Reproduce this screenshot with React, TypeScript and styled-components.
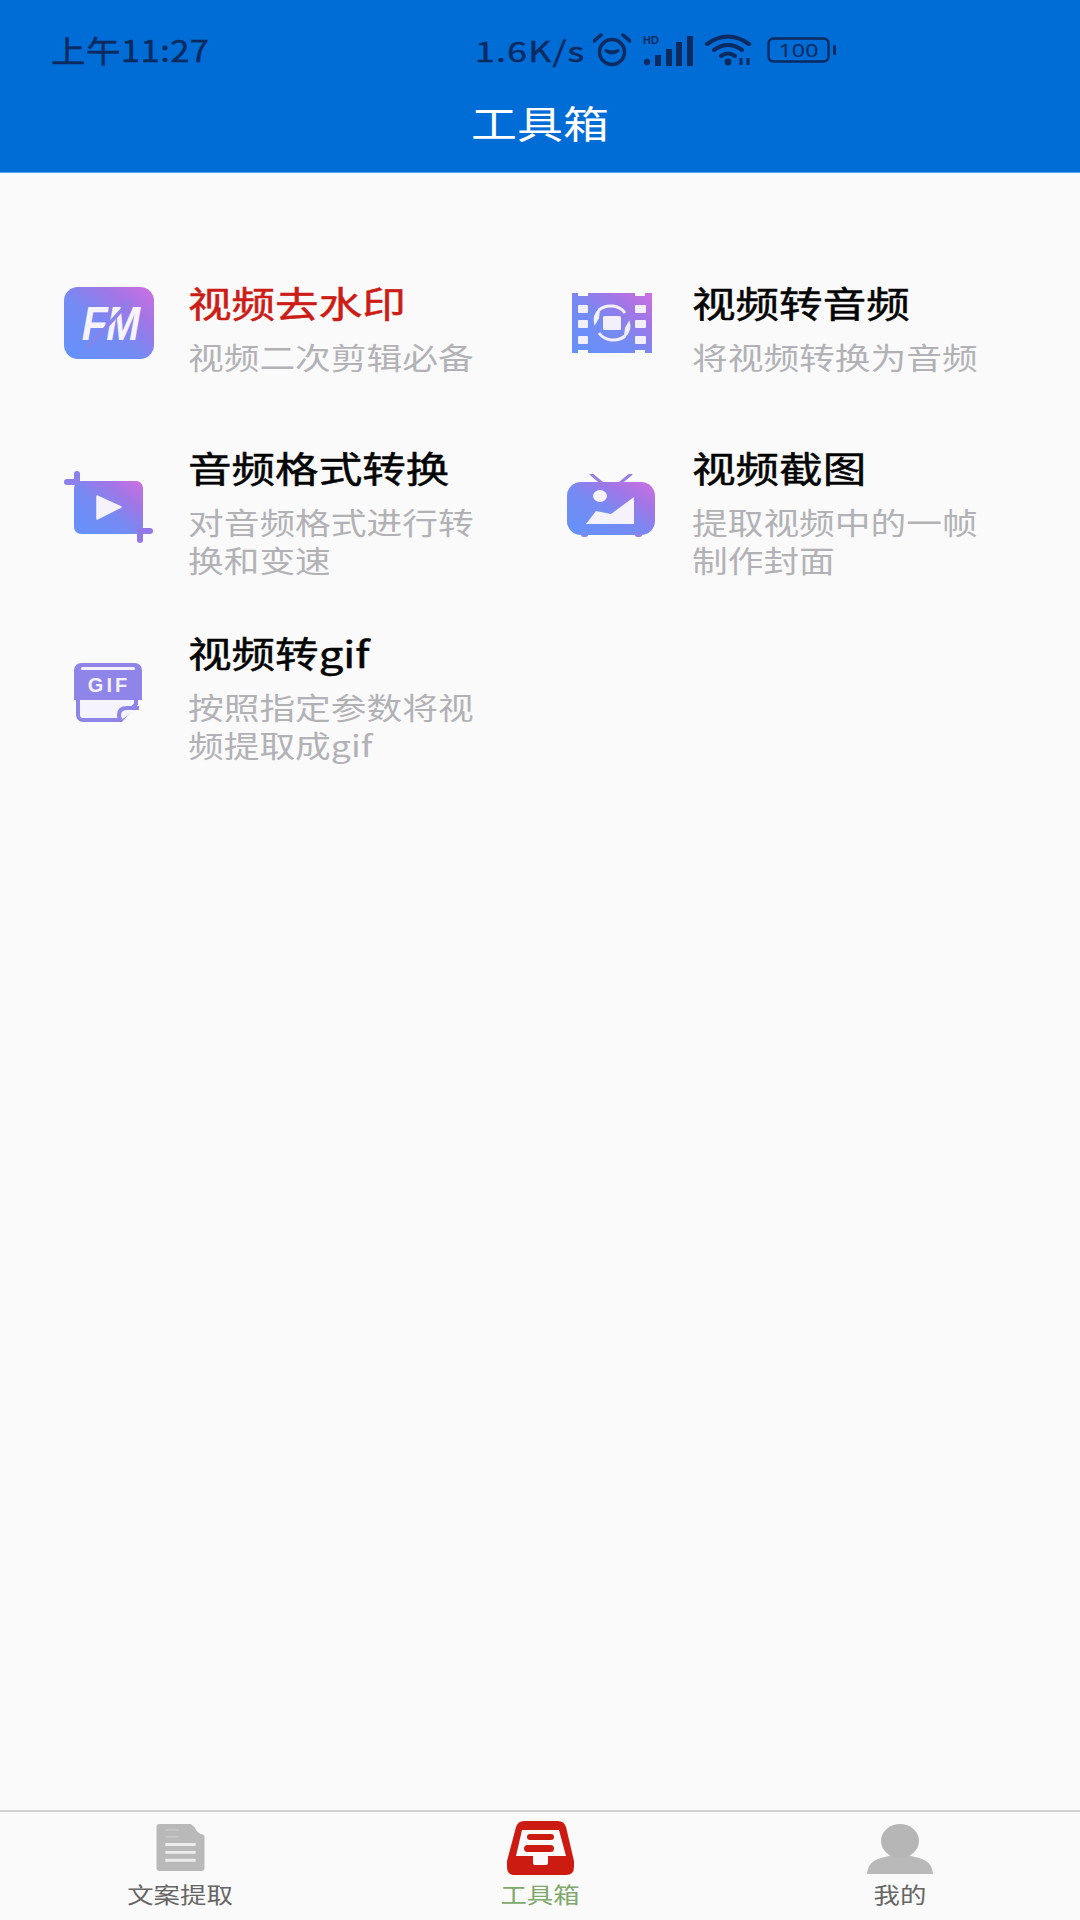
import React from 'react';
import styled, { createGlobalStyle } from 'styled-components';

const Global = createGlobalStyle`
  html, body { margin: 0; padding: 0; background: #fafafb; }
  * { box-sizing: border-box; }
`;

const font = `"Noto Sans CJK SC", "Noto Sans", sans-serif`;

const Page = styled.div`
  width: 1080px;
  height: 1920px;
  display: flex;
  flex-direction: column;
  background: #fafafb;
  font-family: ${font};
  overflow: hidden;
`;

const Header = styled.header`
  height: 173px;
  flex: none;
  background: #006cd6;
  border-bottom: 1px solid #5ea8e8;
`;

const StatusBar = styled.div`
  height: 97px;
  position: relative;
  display: flex;
  align-items: center;
  padding-left: 51px;
  color: #0a2a60;
`;

const Clock = styled.span`
  display: inline-block;
  font-size: 30px;
  line-height: 1;
  -webkit-text-stroke: 0.4px currentColor;
  transform: scaleX(1.15);
  transform-origin: left center;
  letter-spacing: 0.4px;
`;

const StatusRight = styled.div`
  position: absolute;
  left: 475px;
  top: 26px;
  height: 48px;
  display: flex;
  align-items: center;
`;

const Speed = styled.span`
  display: inline-block;
  width: 118px;
  font-size: 28px;
  line-height: 1;
  letter-spacing: 1px;
  -webkit-text-stroke: 0.4px currentColor;
  transform: scaleX(1.27);
  transform-origin: left center;
`;

const StatusIcon = styled.svg<{ $w: number; $h: number; $ml: number }>`
  width: ${(p) => p.$w}px;
  height: ${(p) => p.$h}px;
  margin-left: ${(p) => p.$ml}px;
  flex: none;
  display: block;
`;

const TitleRow = styled.div`
  height: 50px;
  display: flex;
  justify-content: center;
  align-items: center;
`;

const PageTitle = styled.h1`
  margin: 0;
  color: #ffffff;
  font-size: 38px;
  font-weight: 400;
  line-height: 1;
  transform: scaleX(1.21);
`;

const Main = styled.main`
  flex: 1;
  padding: 104px 0 0 62px;
`;

const Grid = styled.div`
  display: grid;
  grid-template-columns: 504px 504px;
  grid-template-rows: 116px auto auto;
  row-gap: 49px;
  align-items: start;
`;

const Item = styled.div`
  display: flex;
  align-items: center;
  gap: 32px;
`;

const IconSlot = styled.div<{ $shift: number }>`
  width: 94px;
  height: 90px;
  flex: none;
  display: flex;
  justify-content: center;
  align-items: center;
  margin-top: -6px;
  margin-left: ${(p) => p.$shift}px;
  margin-right: ${(p) => -p.$shift}px;
`;

const IconSvg = styled.svg<{ $w: number; $h: number }>`
  width: ${(p) => p.$w}px;
  height: ${(p) => p.$h}px;
  display: block;
`;

const TextCol = styled.div`
  display: flex;
  flex-direction: column;
  gap: 10px;
`;

const ItemTitle = styled.div<{ $active?: boolean }>`
  height: 50px;
  line-height: 50px;
  font-size: 36px;
  font-weight: 400;
  white-space: nowrap;
  color: ${(p) => (p.$active ? '#cc1c16' : '#050505')};
  -webkit-text-stroke: 0.5px currentColor;
  transform: scaleX(1.21);
  transform-origin: left center;
`;

const ItemSub = styled.div`
  width: 240px;
  font-size: 30px;
  line-height: 38px;
  color: #b2b2b6;
  transform: scaleX(1.19);
  transform-origin: left center;
`;

const TabBar = styled.nav`
  height: 110px;
  flex: none;
  border-top: 2px solid #d2d2d2;
  background: #fafafa;
  display: grid;
  grid-template-columns: repeat(3, 360px);
`;

const Tab = styled.div`
  display: flex;
  flex-direction: column;
  align-items: center;
`;

const TabIconSlot = styled.div`
  height: 66px;
  padding-top: 12px;
  display: flex;
  justify-content: center;
  align-items: flex-start;
`;

const TabLabel = styled.span<{ $active?: boolean }>`
  display: block;
  font-size: 22px;
  line-height: 30px;
  color: ${(p) => (p.$active ? '#7fa86c' : '#666666')};
  transform: scaleX(1.2);
`;

const BoxSvg = styled.svg`
  width: 67px;
  height: 56px;
  margin-top: -4px;
  display: block;
`;

const Grad = ({ id }: { id: string }) => (
  <defs>
    <linearGradient id={id} x1="0" y1="1" x2="1" y2="0">
      <stop offset="0" stopColor="#6392fa" />
      <stop offset="0.45" stopColor="#768af3" />
      <stop offset="0.72" stopColor="#a076e6" />
      <stop offset="1" stopColor="#cf6fe2" />
    </linearGradient>
  </defs>
);

const FmIcon = () => (
  <IconSvg $w={90} $h={72} viewBox="0 0 90 72">
    <Grad id="g1" />
    <rect width="90" height="72" rx="14" fill="url(#g1)" />
    <text
      x="0"
      y="53"
      transform="translate(54 0) skewX(-10)"
      textAnchor="middle"
      fontFamily='"Liberation Sans", sans-serif'
      fontWeight="700"
      fontSize="48"
      textLength="58"
      lengthAdjust="spacingAndGlyphs"
      fill="#f6f3fc"
    >
      FM
    </text>
    <path d="M24 60 L66 14" stroke="#8a82ec" strokeWidth="3.5" />
  </IconSvg>
);

const FilmIcon = () => (
  <IconSvg $w={80} $h={60} viewBox="0 0 80 60">
    <Grad id="g2" />
    <path
      d="M0 0h6v3h10V0h47v3h10V0h7v60h-7v-3H63v3H16v-3H6v3H0z"
      fill="url(#g2)"
    />
    {[12, 27, 43].map((y) => (
      <React.Fragment key={y}>
        <rect x="6" y={y} width="10" height="8" rx="1" fill="#f2effb" />
        <rect x="63" y={y} width="11" height="8" rx="1" fill="#f2effb" />
      </React.Fragment>
    ))}
    <rect x="31" y="23" width="18" height="14" rx="1.5" fill="#f4f0fb" />
    <path d="M27 17a17 15 0 0 1 26 3" fill="none" stroke="#f4f0fb" strokeWidth="3" />
    <path d="M53 43a17 15 0 0 1-26-3" fill="none" stroke="#f4f0fb" strokeWidth="3" />
    <path d="M23 30a17 15 0 0 1 4-13l-1 8z" fill="#f4f0fb" stroke="#f4f0fb" strokeWidth="2" />
    <path d="M57 30a17 15 0 0 1-4 13l1-8z" fill="#f4f0fb" stroke="#f4f0fb" strokeWidth="2" />
  </IconSvg>
);

const CropIcon = () => (
  <IconSvg $w={90} $h={72} viewBox="0 0 90 72">
    <Grad id="g3" />
    <rect x="10" y="10" width="69" height="53" rx="7" fill="url(#g3)" />
    <rect x="10" y="0" width="6" height="14" rx="3" fill="#8d80ec" />
    <rect x="0" y="8" width="14" height="6" rx="3" fill="#8d80ec" />
    <rect x="73" y="57" width="16" height="6" rx="3" fill="#9478e8" />
    <rect x="73" y="57" width="6" height="15" rx="3" fill="#9478e8" />
    <path d="M33 25l24 11-24 12z" fill="#f6f2fc" stroke="#f6f2fc" strokeWidth="1.5" strokeLinejoin="round" />
  </IconSvg>
);

const TvIcon = () => (
  <IconSvg $w={88} $h={66} viewBox="0 0 88 66">
    <Grad id="g4" />
    <path d="M24 0l12 10M64 0L52 10" stroke="#9a7fe8" strokeWidth="3" strokeLinecap="round" />
    <rect x="0" y="8" width="88" height="53" rx="14" fill="url(#g4)" />
    <rect x="14" y="58" width="7" height="5" rx="2.5" fill="#7a8cf2" />
    <rect x="68" y="58" width="7" height="5" rx="2.5" fill="#8f80ec" />
    <ellipse cx="33" cy="22" rx="7" ry="6" fill="#f6f2fc" />
    <path d="M19 50l10-13 15 3 23-17v27z" fill="#f6f2fc" />
  </IconSvg>
);

const GifIcon = () => (
  <IconSvg $w={70} $h={60} viewBox="0 0 70 60">
    <path d="M0 8a7 7 0 0 1 7-7h54a7 7 0 0 1 7 7v30H0z" fill="#8f84e8" />
    <rect x="7" y="5" width="54" height="3" rx="1.5" fill="#f3f1fc" />
    <text
      x="35"
      y="30"
      textAnchor="middle"
      fontFamily='"Liberation Sans", sans-serif'
      fontWeight="700"
      fontSize="20"
      letterSpacing="3"
      fill="#f3f1fc"
    >
      GIF
    </text>
    <path
      d="M4 38v15a5 5 0 0 0 5 5h38l15-16V38"
      fill="#f5f4fc"
      stroke="#8f84e8"
      strokeWidth="4"
    />
    <path d="M47 58a6 6 0 0 1-2-5q0-7 8-7h12" fill="#f5f4fc" stroke="#8f84e8" strokeWidth="4" />
  </IconSvg>
);

const AlarmGlyph = () => (
  <StatusIcon $w={38} $h={36} $ml={0} viewBox="0 0 38 36">
    <circle cx="19" cy="20" r="12.5" fill="none" stroke="#0a2a60" strokeWidth="3.5" />
    <path d="M1 9l7-6M37 9l-7-6" stroke="#0a2a60" strokeWidth="3.5" strokeLinecap="round" />
    <path d="M12 18q7 7 14 0q-7 3-14 0z" fill="#0a2a60" stroke="#0a2a60" strokeWidth="2" />
  </StatusIcon>
);

const SignalGlyph = () => (
  <StatusIcon $w={50} $h={32} $ml={12} viewBox="0 0 50 32">
    <text x="0" y="10" fontFamily='"Liberation Sans", sans-serif' fontWeight="700" fontSize="11" fill="#0a2a60">
      HD
    </text>
    <circle cx="4" cy="28" r="3.2" fill="#0a2a60" />
    <rect x="12" y="21" width="6" height="11" fill="#0a2a60" />
    <rect x="23" y="15" width="6" height="17" fill="#0a2a60" />
    <rect x="33" y="8" width="6" height="24" fill="#0a2a60" />
    <rect x="44" y="2" width="6" height="30" fill="#0a2a60" />
  </StatusIcon>
);

const WifiGlyph = () => (
  <StatusIcon $w={48} $h={32} $ml={12} viewBox="0 0 48 32">
    <g fill="none" stroke="#0a2a60" strokeWidth="4" strokeLinecap="round">
      <path d="M2 10Q23-5 44 10" />
      <path d="M9 16Q23 6 37 16" />
      <path d="M16 22Q23 17 30 22" />
    </g>
    <circle cx="23" cy="28" r="3.4" fill="#0a2a60" />
    <path d="M36 24v7M43 24v7" stroke="#0a2a60" strokeWidth="3" />
  </StatusIcon>
);

const BatteryGlyph = () => (
  <StatusIcon $w={70} $h={26} $ml={14} viewBox="0 0 70 26">
    <rect x="1.5" y="1.5" width="60" height="23" rx="5" fill="none" stroke="#0a2a60" strokeWidth="2.4" />
    <rect x="66" y="8" width="3" height="10" rx="1.5" fill="#0a2a60" />
    <text x="31.5" y="19.5" textAnchor="middle" fontFamily='"Noto Sans", sans-serif' fontSize="18" textLength="40" lengthAdjust="spacingAndGlyphs" fill="#0a2a60">
      100
    </text>
  </StatusIcon>
);

const DocTabIcon = () => (
  <IconSvg $w={49} $h={47} viewBox="0 0 49 48">
    <path d="M3 0h32l14 12v33a3 3 0 0 1-3 3H3a3 3 0 0 1-3-3V3a3 3 0 0 1 3-3z" fill="#b9b9b9" />
    <path d="M39 0l10 10q-8 0-10-10z" fill="#fafafa" stroke="#fafafa" strokeWidth="1.5" />
    <path d="M9 21h31M9 29h31M9 37h31" stroke="#ececec" strokeWidth="3" />
    <path d="M9 6h14M9 13h14" stroke="#c6c6c6" strokeWidth="2" />
  </IconSvg>
);

const BoxTabIcon = () => (
  <BoxSvg viewBox="0 0 67 54">
    <path d="M17 0h34q6 0 8 6l8 34v6q0 8-8 8H8q-8 0-8-8v-6L9 6q2-6 8-6z" fill="#cc1c12" />
    <path d="M15 9h37l7 26H41v7q0 2-2 2H28q-2 0-2-2v-7H9z" fill="#fafafa" />
    <rect x="20" y="13" width="27" height="6" rx="3" fill="#cc1c12" />
    <rect x="17" y="24" width="30" height="7" rx="3.5" fill="#cc1c12" />
  </BoxSvg>
);

const PersonTabIcon = () => (
  <IconSvg $w={66} $h={50} viewBox="0 0 66 50">
    <ellipse cx="33" cy="17" rx="19" ry="17" fill="#b6b6b6" />
    <path d="M0 50q1-13 14-16q9-2 10-3q9 5 18 0q1 1 10 3q13 3 14 16z" fill="#b9b9b9" />
  </IconSvg>
);

const tools = [
  { title: '视频去水印', sub: '视频二次剪辑必备', icon: <FmIcon />, shift: 0, active: true },
  { title: '视频转音频', sub: '将视频转换为音频', icon: <FilmIcon />, shift: -1 },
  { title: '音频格式转换', sub: '对音频格式进行转换和变速', icon: <CropIcon />, shift: 0 },
  { title: '视频截图', sub: '提取视频中的一帧制作封面', icon: <TvIcon />, shift: -2 },
  { title: '视频转gif', sub: '按照指定参数将视频提取成gif', icon: <GifIcon />, shift: 0 },
];

const tabs = [
  { label: '文案提取', icon: <DocTabIcon /> },
  { label: '工具箱', icon: <BoxTabIcon />, active: true },
  { label: '我的', icon: <PersonTabIcon /> },
];

export default function App() {
  return (
    <Page>
      <Global />
      <Header>
        <StatusBar>
          <Clock>上午11:27</Clock>
          <StatusRight>
            <Speed>1.6K/s</Speed>
            <AlarmGlyph />
            <SignalGlyph />
            <WifiGlyph />
            <BatteryGlyph />
          </StatusRight>
        </StatusBar>
        <TitleRow>
          <PageTitle>工具箱</PageTitle>
        </TitleRow>
      </Header>
      <Main>
        <Grid>
          {tools.map((t) => (
            <Item key={t.title}>
              <IconSlot $shift={t.shift}>{t.icon}</IconSlot>
              <TextCol>
                <ItemTitle $active={t.active}>{t.title}</ItemTitle>
                <ItemSub>{t.sub}</ItemSub>
              </TextCol>
            </Item>
          ))}
        </Grid>
      </Main>
      <TabBar>
        {tabs.map((t) => (
          <Tab key={t.label}>
            <TabIconSlot>{t.icon}</TabIconSlot>
            <TabLabel $active={t.active}>{t.label}</TabLabel>
          </Tab>
        ))}
      </TabBar>
    </Page>
  );
}
